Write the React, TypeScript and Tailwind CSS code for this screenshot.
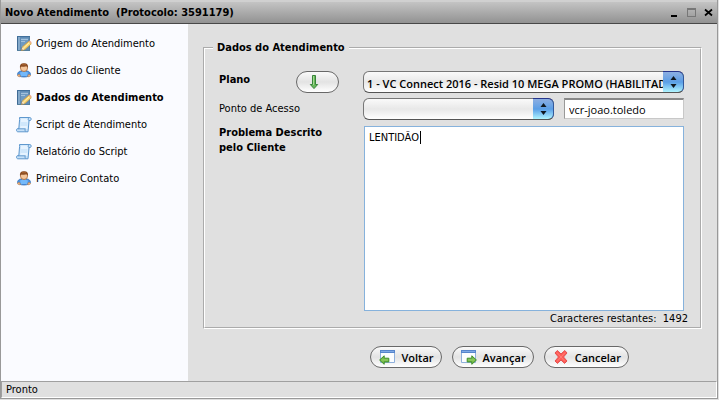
import React from "react";

const sans = "font-['Tahoma','DejaVu_Sans_Condensed','Noto_Sans',sans-serif]";
const humanist = "font-['Trebuchet_MS','Open_Sans','Noto_Sans',sans-serif]";

function NotebookIcon() {
  return (
    <svg className="size-4 shrink-0" viewBox="0 0 16 16" aria-hidden="true">
      <rect x="1" y="0" width="13" height="15" rx="1" fill="#5f8bb5" />
      <path d="M1.5 0v15" stroke="#3f6a94" />
      <path d="M3 1v13" stroke="#a9c6de" />
      <path d="M1 .5h13" stroke="#41709c" />
      <path d="M13.5 1v14M1 14.5h13" stroke="#55809f" />
      <path d="M5 2h7v9H5z" fill="#6f9ac1" />
      <path d="M5 3.5h7M5 5.5h4" stroke="#a3c1db" />
      <path d="M5.5 14.5l1-3.7 6.3-5.5 2.5 2.4-6.3 5.8z" fill="#f9d774" stroke="#c4903a" strokeWidth=".7" />
      <path d="M7.5 12l6-5.4" stroke="#ffefb0" />
      <path d="M12.6 5.3l1.2-.9 1.9 1.8-.7 1.3z" fill="#efa98a" />
      <path d="M5.5 14.5l.9-3.3 2.1 2z" fill="#f5e2c4" />
      <path d="M5.5 14.5l.3-1.3 1 .9z" fill="#444" />
    </svg>
  );
}

function UserIcon() {
  return (
    <svg className="size-4 shrink-0" viewBox="0 0 16 16" aria-hidden="true">
      <path d="M1.5 11.5C1.5 9.5 3.2 8 5 8h6c1.8 0 3.5 1.5 3.5 3.5 0 3.3-13 3.3-13 0z" fill="#4b92e2" stroke="#3a74b8" strokeWidth=".8" />
      <path d="M4 9.5c2-1 6-1 8 0l-1 3.5H5z" fill="#74b9fa" />
      <path d="M1.3 12.7l1.7-1.7 1.7 2.3-1.5.5zM14.7 12.7L13 11l-1.7 2.3 1.5.5z" fill="#efb580" stroke="#b8763f" strokeWidth=".5" />
      <circle cx="8" cy="4.9" r="3.6" fill="#f4c69b" stroke="#a86a3a" strokeWidth=".8" />
      <path d="M4 4.8C3.6 1.5 5.1.2 8 .2s4.4 1.3 4 4.6c-.7-.4-1.1-.9-1.3-1.5-1.5.6-4.2.4-5.2.2z" fill="#8b4c22" />
      <path d="M6 1.7h4" stroke="#a9642f" />
    </svg>
  );
}

function ScriptIcon() {
  return (
    <svg className="size-4 shrink-0" viewBox="0 0 16 16" aria-hidden="true">
      <path d="M3.5.5h10.3c1.8 0 1.8 3 .2 3h-.9L12 14.8H2c-2 0-2-3.2-.2-3.2h1L3.6 2.5z" fill="#c5e0f8" stroke="#5f98ce" />
      <path d="M5 1.5h7.2L11.4 12H4.1z" fill="#e6f3ff" />
      <path d="M4.8 5h6.7l-.3 4H4.5z" fill="#d0e7fb" />
      <path d="M1.8 11.8h7.7c-.8.5-.6 2.2.3 2.8M12.8 3.6c-1-.5-.7-2.2.2-2.8" fill="none" stroke="#5f98ce" />
    </svg>
  );
}

function WindowArrowIcon({ back = false }: { back?: boolean }) {
  return (
    <svg className="size-4 shrink-0" viewBox="0 0 16 16" aria-hidden="true">
      <path d={back ? "M1.5 1.5h14v12h-14z" : "M.5 1.5h14v12H.5z"} fill="#fbfdff" stroke="#8fb0dc" />
      <path d={back ? "M1 1h15v3H1z" : "M0 1h15v3H0z"} fill="#5685cc" />
      <path d={back ? "M2 2.5h13" : "M1 2.5h13"} stroke="#7fa9e6" />
      <path
        d={back ? "M.6 11l4.6-4.2v2.4h4.6v3.7H5.2v2.4z" : "M15.4 11l-4.6-4.2v2.4H6.2v3.7h4.6v2.4z"}
        fill="#79bd4b"
        stroke="#3f8f2a"
      />
      <path d={back ? "M2.5 11h6.3" : "M7.2 11h6.3"} stroke="#94cf6a" />
    </svg>
  );
}

function CrossIcon() {
  return (
    <svg className="size-4 shrink-0" viewBox="0 0 16 16" aria-hidden="true">
      <path d="M2 4l2.3-2.5L8 5l3.8-3.5L14 4l-3.5 4 3.5 4-2.4 2.4L8 11l-3.6 3.4L2 12l3.5-4z" fill="#ff5b55" stroke="#e25050" />
      <path d="M4 3.5l8 9M12 3.5l-8 9" stroke="#ff7c76" />
    </svg>
  );
}

function DownIcon() {
  return (
    <svg className="size-4" viewBox="0 0 16 16" aria-hidden="true">
      <path d="M6.5 1.5h3v9h2.2L8 14.6l-3.7-4.1h2.2z" fill="#68b85b" stroke="#37843a" />
      <path d="M7.5 2v9" stroke="#a2d990" />
    </svg>
  );
}

const pill =
  "flex h-[22px] items-center rounded-full border border-[#686868] bg-linear-to-b from-[#fafafa] via-[#e3e3e3] via-50% to-white";

function ActionButton({ icon, children }: { icon: React.ReactNode; children: string }) {
  return (
    <button type="button" className={`${pill} gap-1.5 pr-[7px] pl-2 text-[11px] font-semibold ${humanist}`}>
      {icon}
      {children}
    </button>
  );
}

function Dropdown({ id, options, className }: { id: string; options: string[]; className: string }) {
  return (
    <div className={`relative h-[22px] ${className}`}>
      <select
        id={id}
        className={`block h-full w-full appearance-none overflow-hidden rounded-md border border-[#777] border-b-[#555] bg-linear-to-b from-[#fafafa] via-[#e8e8e8] via-50% to-white pt-0.5 pr-5 pl-[3px] text-[11px] font-semibold text-black ${humanist}`}
      >
        {options.map((o) => (
          <option key={o}>{o}</option>
        ))}
      </select>
      <span className="pointer-events-none absolute inset-y-0 right-0 flex w-[21px] items-center justify-center rounded-r-md border border-l-0 border-t-[#26348b] border-r-[#33599b] border-b-[#555] bg-linear-to-b from-[#8caee1] via-[#5a9ee6] via-50% to-[#b0f5ff]">
        <svg className="h-3 w-[7px]" viewBox="0 0 7 12" aria-hidden="true">
          <path d="M3.5 0L6.5 4h-6zM3.5 12l3-4h-6z" fill="#101820" />
        </svg>
      </span>
    </div>
  );
}

const steps = [
  { label: "Origem do Atendimento", icon: <NotebookIcon /> },
  { label: "Dados do Cliente", icon: <UserIcon /> },
  { label: "Dados do Atendimento", icon: <NotebookIcon />, current: true },
  { label: "Script de Atendimento", icon: <ScriptIcon /> },
  { label: "Relatório do Script", icon: <ScriptIcon /> },
  { label: "Primeiro Contato", icon: <UserIcon /> },
];

export default function App() {
  return (
    <div className={`flex min-h-screen flex-col bg-[#e0e0e0] pr-px pb-px text-[11px] leading-[15px] text-black ${sans}`}>
      <div className="flex grow flex-col border border-t-0 border-[#999]">
        <header className="flex h-6 items-center justify-between border-t-2 border-b border-t-[#d0d0d0] border-b-[#484848] bg-linear-to-b from-[#c4c4c4] to-[#929292] pr-1 pl-1">
          <h1 className="font-bold whitespace-pre">Novo Atendimento  (Protocolo: 3591179)</h1>
          <div className="flex items-center gap-2">
            <button type="button" aria-label="Minimizar" className="flex h-[9px] w-2 items-end">
              <span className="h-0.5 w-1.5 bg-black" />
            </button>
            <button type="button" aria-label="Maximizar" className="h-[9px] w-[9px] border border-t-2 border-[#777]" />
            <button type="button" aria-label="Fechar">
              <svg className="h-[9px] w-[9px]" viewBox="0 0 9 9" aria-hidden="true">
                <path d="M1 1.5l7 6M8 1.5l-7 6" stroke="#000" strokeWidth="1.7" />
              </svg>
            </button>
          </div>
        </header>

        <div className="flex grow">
          <nav className="w-[187px] shrink-0 bg-[#fafbff] pt-1.5 pl-[15px]">
            <ul>
              {steps.map((s) => (
                <li key={s.label}>
                  <a
                    href="#"
                    aria-current={s.current ? "step" : undefined}
                    className={`flex h-[27px] items-center gap-1 ${s.current ? "font-bold" : ""}`}
                  >
                    {s.icon}
                    {s.label}
                  </a>
                </li>
              ))}
            </ul>
          </nav>

          <main className="min-w-0 grow px-[15px] pt-4">
            <fieldset className="border-2 border-white px-2 pb-px [border-style:groove]">
              <legend className="px-1 font-bold">Dados do Atendimento</legend>
              <div className="grid grid-cols-[144px_minmax(0,1fr)] gap-y-[5px] px-2 pt-4 pl-1.5">
                <div className="flex items-center">
                  <label htmlFor="plano" className="w-[77px] pb-1.5 font-bold">Plano</label>
                  <button type="button" aria-label="Buscar plano" className={`${pill} w-[43px] justify-center pr-2`}>
                    <DownIcon />
                  </button>
                </div>
                <Dropdown id="plano" options={["1 - VC Connect 2016 - Resid 10 MEGA PROMO (HABILITADO)"]} className="w-full" />
                <label htmlFor="ponto" className="self-center pb-0.5">Ponto de Acesso</label>
                <div className="flex gap-2.5">
                  <Dropdown id="ponto" options={[""]} className="min-w-0 grow" />
                  <input
                    aria-label="Usuário"
                    defaultValue="vcr-joao.toledo"
                    className={`h-[21px] w-[120px] border border-t-2 border-[#c8c8c8] border-t-[#888] border-l-[#999] bg-white px-1 text-[11px] ${humanist}`}
                  />
                </div>
                <label htmlFor="problema" className="font-bold">
                  Problema Descrito
                  <br />
                  pelo Cliente
                </label>
                <div className="relative pt-px pl-px">
                  <textarea
                    id="problema"
                    defaultValue="LENTIDÃO"
                    className="block h-[185px] w-full resize-none border border-[#86b2dc] bg-white px-1 py-[3px] text-[11px] leading-[15px]"
                  />
                  <span className="absolute top-[6px] left-[57px] h-[13px] w-px bg-black" />
                </div>
              </div>
              <p className="pr-1 text-right whitespace-pre">Caracteres restantes:  1492</p>
            </fieldset>
            <div className="flex justify-end gap-2.5 pt-[17px] pr-[73px]">
              <ActionButton icon={<WindowArrowIcon back />}>Voltar</ActionButton>
              <ActionButton icon={<WindowArrowIcon />}>Avançar</ActionButton>
              <ActionButton icon={<CrossIcon />}>Cancelar</ActionButton>
            </div>
          </main>
        </div>

        <footer className="h-[17px] border border-[#a0a0a0] border-r-white border-b-white px-1">Pronto</footer>
      </div>
    </div>
  );
}
